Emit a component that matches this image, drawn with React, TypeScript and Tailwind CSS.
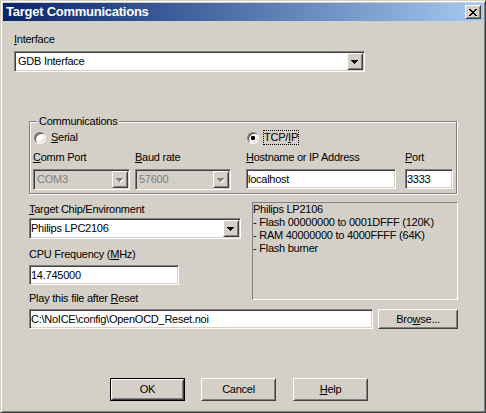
import type { ReactNode } from "react";

const FONT = "font-['Liberation_Sans',Arial,sans-serif] text-[11px] leading-[13px] tracking-[-0.25px]";
const SUNKEN =
  "border border-t-[#808080] border-l-[#808080] border-r-white border-b-white shadow-[inset_1px_1px_0_#404040,inset_-1px_-1px_0_#d4d0c8]";
const RAISED =
  "border border-t-white border-l-white border-r-[#404040] border-b-[#404040] shadow-[inset_1px_1px_0_#d4d0c8,inset_-1px_-1px_0_#808080]";

function Arrow({ disabled }: { disabled?: boolean }) {
  const rows = [
    [0, 7],
    [1, 5],
    [2, 3],
    [3, 1],
  ];
  return (
    <svg width="8" height="5" viewBox="0 0 8 5" shapeRendering="crispEdges">
      {disabled &&
        rows.map(([y, w]) => <rect key={`s${y}`} x={y + 1} y={y + 1} width={w} height={1} fill="#ffffff" />)}
      {rows.map(([y, w]) => (
        <rect key={y} x={y} y={y} width={w} height={1} fill={disabled ? "#808080" : "#000000"} />
      ))}
    </svg>
  );
}

function Combo({ value, className, disabled, flush }: { value: string; className: string; disabled?: boolean; flush?: boolean }) {
  return (
    <div className={`${SUNKEN} ${className} flex h-[21px] p-[1px] ${disabled ? "bg-[#d4d0c8] text-[#808080]" : "bg-white text-black"}`}>
      <div className={`flex flex-1 items-center overflow-hidden whitespace-nowrap ${flush ? "pl-0" : "pl-[2px]"}`}>{value}</div>
      <div className={`${RAISED} flex h-[17px] w-[16px] items-center justify-center bg-[#d4d0c8] pt-[1px]`}>
        <Arrow disabled={disabled} />
      </div>
    </div>
  );
}

function Edit({ value, className }: { value: string; className: string }) {
  return (
    <div className={`${SUNKEN} ${className} flex h-[20px] items-center overflow-hidden whitespace-nowrap bg-white p-[1px] text-black`}>
      {value}
    </div>
  );
}

function Radio({ checked }: { checked?: boolean }) {
  return (
    <div className="flex h-[12px] w-[12px] items-center justify-center rounded-full border border-t-[#808080] border-l-[#808080] border-r-white border-b-white bg-white shadow-[inset_1px_1px_0_#404040,inset_-1px_-1px_0_#d4d0c8]">
      {checked && <div className="h-[4px] w-[4px] rounded-[1px] bg-black" />}
    </div>
  );
}

function Button({ children, className }: { children: ReactNode; className?: string }) {
  return (
    <div className={`${RAISED} ${className ?? ""} flex items-center justify-center bg-[#d4d0c8]`}>{children}</div>
  );
}

export default function App() {
  return (
    <div className={`${FONT} h-[413px] w-[486px] border border-t-[#d4d0c8] border-l-[#d4d0c8] border-r-[#404040] border-b-[#404040] bg-[#d4d0c8] p-[2px] text-black shadow-[inset_1px_1px_0_#ffffff,inset_-1px_-1px_0_#808080]`}>
      {/* title bar */}
      <div className="flex h-[18px] items-center bg-linear-to-r from-[#0a246a] to-[#a6caf0] pl-[3px] pr-[2px]">
        <span className="flex-1 text-[13px] font-bold leading-[16px] text-white">Target Communications</span>
        <Button className="h-[14px] w-[16px]">
          <svg width="8" height="7" viewBox="0 0 8 7" shapeRendering="crispEdges">
            <path d="M0 0h2v1H0zM6 0h2v1H6zM1 1h2v1H1zM5 1h2v1H5zM2 2h4v1H2zM3 3h2v1H3zM2 4h4v1H2zM1 5h2v1H1zM5 5h2v1H5zM0 6h2v1H0zM6 6h2v1H6z" fill="#000" />
          </svg>
        </Button>
      </div>

      <div className="flex flex-col">
        <div className="ml-[11px] mt-[12px]">
          <u>I</u>nterface
        </div>
        <Combo value="GDB Interface" className="ml-[11px] mt-[5px] w-[351px]" />

        <fieldset className="ml-[26px] mt-[43px] w-[428px] border border-[#808080] pb-[3px] pl-[3px] pt-[2px] shadow-[1px_1px_0_#ffffff,inset_1px_1px_0_#ffffff]">
          <legend className="ml-[4px] bg-[#d4d0c8] px-[2px]">Communications</legend>
          <div className="grid grid-cols-[102px_111px_159px_48px]">
            <div className="col-span-2 flex h-[15px] items-center pl-[1px]">
              <Radio />
              <span className="ml-[4px] border border-transparent">
                <u>S</u>erial
              </span>
            </div>
            <div className="col-span-2 flex h-[15px] items-center pl-[1px]">
              <Radio checked />
              <span className="ml-[4px] border border-dotted border-black">
                TCP/<u>I</u>P
              </span>
            </div>

            <div className="mt-[6px]">
              <u>C</u>omm Port
            </div>
            <div className="mt-[6px]">
              <u>B</u>aud rate
            </div>
            <div className="mt-[6px]">
              <u>H</u>ostname or IP Address
            </div>
            <div className="mt-[6px]">
              <u>P</u>ort
            </div>

            <Combo value="COM3" disabled className="mt-[5px] w-[97px]" />
            <Combo value="57600" disabled className="mt-[5px] w-[96px]" />
            <Edit value="localhost" className="mt-[5px] w-[150px]" />
            <Edit value="3333" className="mt-[5px] w-[48px]" />
          </div>
        </fieldset>

        <div className="ml-[26px] mt-[8px] flex">
          <div className="flex w-[223px] flex-col">
            <div className="mt-[1px]">
              <u>T</u>arget Chip/Environment
            </div>
            <Combo value="Philips LPC2106" flush className="mt-[2px] w-[212px]" />
            <div className="mt-[9px]">
              CPU Frequency (<u>M</u>Hz)
            </div>
            <Edit value="14.745000" className="mt-[4px] w-[150px]" />
            <div className="mt-[7px] whitespace-nowrap">
              Play this file after <u>R</u>eset
            </div>
          </div>
          <div className="h-[98px] w-[206px] border border-t-[#808080] border-l-[#808080] border-r-white border-b-white">
            <div>Philips LP2106</div>
            <div>- Flash 00000000 to 0001DFFF (120K)</div>
            <div>- RAM 40000000 to 4000FFFF (64K)</div>
            <div>- Flash burner</div>
          </div>
        </div>

        <div className="ml-[26px] mt-[4px] flex">
          <Edit value="C:\NoICE\config\OpenOCD_Reset.noi" className="w-[344px]" />
          <Button className="ml-[5px] h-[20px] w-[80px]">
            <span>
              Bro<u>w</u>se...
            </span>
          </Button>
        </div>

        <div className="ml-[107px] mt-[49px] flex">
          <div className="flex h-[23px] w-[75px] border border-black">
            <Button className="flex-1">OK</Button>
          </div>
          <Button className="ml-[16px] h-[23px] w-[75px]">Cancel</Button>
          <Button className="ml-[17px] h-[23px] w-[75px]">
            <span>
              <u>H</u>elp
            </span>
          </Button>
        </div>
      </div>
    </div>
  );
}
